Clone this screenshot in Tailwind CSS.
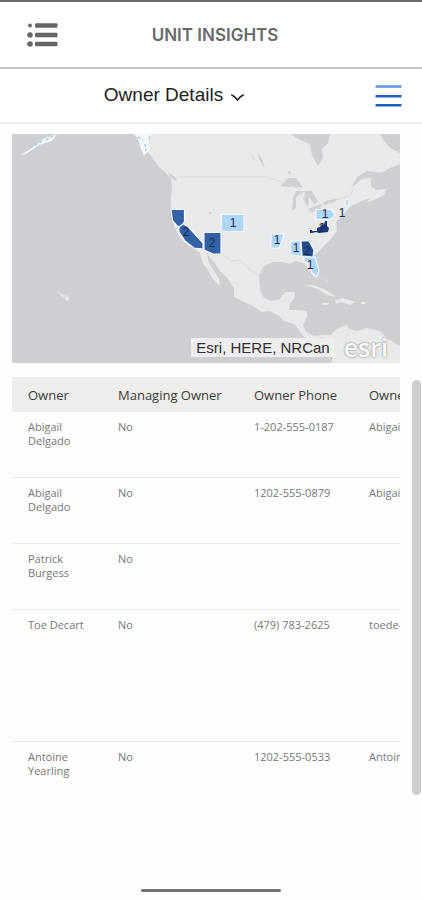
<!DOCTYPE html>
<html lang="en">
<head>
<meta charset="utf-8">
<meta name="viewport" content="width=device-width, initial-scale=1">
<title>Unit Insights</title>
<script src="https://cdn.jsdelivr.net/npm/@tailwindcss/browser@4"></script>
</head>
<body class="bg-[#fefefe] min-h-screen flex flex-col border-t-2 border-[#6c6c6c] overflow-x-hidden font-['Open_Sans',sans-serif]">
  <header class="grid grid-cols-[88px_1fr_80px] items-center h-[67px] border-b-2 border-[#c4c4c4] bg-white">
    <button type="button" aria-label="Open menu" class="pl-[27px]">
      <svg class="w-[31px] h-6" viewBox="0 0 31 24" fill="#666">
        <circle cx="3" cy="2.5" r="1.9"/><circle cx="3" cy="12" r="2.8"/><circle cx="3" cy="21" r="2.8"/>
        <rect x="8" y="0.3" width="22.500" height="4.500" rx="1"/><rect x="8" y="9.700" width="22.500" height="4.500" rx="1"/><rect x="8" y="18.800" width="22.500" height="4.500" rx="1"/>
      </svg>
    </button>
    <h1 class="text-center text-[17px] leading-6 font-semibold text-[#6a6a6a] font-['Inter',sans-serif]">UNIT INSIGHTS</h1>
  </header>

  <nav class="grid grid-cols-[1fr_74px] items-center h-[55px] border-b-2 border-[#eeeeee] bg-white">
    <button type="button" class="flex items-center justify-center gap-2 pb-[2px] text-[19px] leading-6 text-[#222] font-['Liberation_Sans',sans-serif]">
      Owner Details
      <svg class="w-[13px] h-3 mt-1" viewBox="0 0 13 12" fill="none" stroke="#222" stroke-width="1.400" stroke-linecap="round"><path d="M0.700 4Q3.500 5 6.500 9Q9.500 5 12.300 4"/></svg>
    </button>
    <button type="button" aria-label="Page options" class="flex justify-end pr-5">
      <svg class="w-[27px] h-6" viewBox="0 0 27 24"><path d="M0.500 2.500h26" stroke="#6f9fdf" stroke-width="2.800"/><path d="M0.500 12.300h26M0.500 21.300h26" stroke="#1c62be" stroke-width="2.400"/></svg>
    </button>
  </nav>

  <main class="grow pl-3 pr-[22px] pt-[10px]">
    <section aria-label="Owner map" class="relative">
      <svg class="block w-full h-auto" viewBox="12 134 388 229">
        <rect x="12" y="134" width="388" height="229" fill="#cfced2"/>
        <g fill="#e9e9e9">
          <path d="M133 134L138 138L140 147L144 156L146 150L152 157L158 166L165 172L171 179L172 186L171 197L171 212L174 226L179 236L187 245L195 249L200 253L203 263L208 270L213 279L220 286L219 279L212 268L208 261L207 254L214 262L220 271L228 279L234 288L234 297L244 302L253 306L262 312L270 311L279 316L284 321L294 324L299 330L304 337L314 341L322 337L330 341L328 350L333 358L331 363L400 363L400 346L388 339L380 331L367 328L357 331L350 329L346 325L337 329L331 335L323 335L314 336L306 332L303 325L307 317L307 311L297 310L289 310L290 304L294 299L295 292L285 292L280 299L272 301L264 298L260 290L259 276L264 266L273 262L282 262L290 264L295 261L303 263L308 268L314 277L317 274L315 265L312 257L321 249L330 240L337 231L336 222L344 214L351 206L362 201L370 198L367 202L372 201L384 195L386 189L376 190L371 186L371 178L362 179L351 188L357 177L367 171L381 173L390 168L400 164L400 153L390 148L382 138L380 134Z"/>
          <path d="M305 285L313 285L326 290L336 297L327 295L318 289ZM335 300L343 298L355 302L350 305L341 302L336 304ZM361 302l5 0-1 2-4 0ZM322 303l7 0-1 2-5 0ZM325 278l3 4-2-1ZM56 290l9 6-2 1ZM65 295l4 2-1 4-3-1Z"/>
        </g>
        <path d="M20 155L29 150L43 139L57 134L52 141L39 145L26 154ZM135 134h17l-4 7 2 8-6 7-3-8-2-7Z" fill="#f4f7fb"/>
        <path d="M35 145l9-5m2 0l9-5M138 137l5 3m2 4l1 7m3-12l1-3" fill="none" stroke="#a7cdef" stroke-width="1.500" stroke-dasharray="3 2"/>
        <g fill="#cfced2">
          <path d="M291 134L298 139L310 144L312 155L318 166L323 158L322 149L328 143L330 134Z"/>
          <path d="M280 186L288 178L296 178L303 188L296 187L288 187Z"/>
          <path d="M296 191L305 191L296 197L296 208L292 211L293 198Z"/>
          <path d="M305 191L312 191L318 202L314 204L309 197L308 207L304 201Z"/>
          <path d="M308 209L318 205L322 204L321 208L312 213ZM323 202L337 198L335 202L325 205Z"/>
          <path d="M250 151l3 8 5 2-4-2ZM257 151l5 8 3 10-5-8Z"/>
          <circle cx="289.500" cy="172.500" r="1.500"/><circle cx="210" cy="213" r="1.200"/>
          <path d="M168 172l8 6 1 4-7-5Z"/>
        </g>
        <path d="M174 177H264L281 181L299 189L309 211L321 207L339 199L350 196L354 187M207 254L222 254L232 261L240 260L249 269L259 275M320 337l3 12 10 7M348 331l-3 12 15 2" fill="none" stroke="#dbdbdc"/>
        <g stroke="#f2f8ff" stroke-width="1.200" stroke-linejoin="round">
          <path d="M171 209.500h13.500v12l-3 5h-4l-5-6Z" fill="#3460a5"/>
          <path d="M179 227l4-3 4 2 6 6 10 11 0 6-9-1-9-7-6-9Z" fill="#3460a5"/>
          <path d="M204 232.500h17v21.500h-8l-9-4Z" fill="#3460a5"/>
          <g fill="#b0d5fb">
            <path d="M221.500 214.500h22.500v17h-22.500Z"/>
            <path d="M271 234h13l-2 7-3 7h-8Z"/>
            <path d="M316 209.500h15l4 5-4 5h-15Z"/>
            <path d="M346 199l3 1-1 6-3 0Z"/>
            <path d="M290.500 241.500l10-1 1 16-11-2Z"/>
            <path d="M304 257h11l4 13-2 7-5-4-3-11h-5Z"/>
          </g>
          <path d="M301 241h8l5 9-1 7-11-1Z" fill="#234d8e"/>
        </g>
        <path d="M310 230h2v1h5v-3l3-1 2-3 2 1 1-4h2v5l2 2-1 4-9 1-3-1-4 1h-2Z" fill="#18397a"/>
        <g class="font-['Liberation_Sans',sans-serif] text-[12px]" fill="#1b2d4c" text-anchor="middle">
          <text x="186" y="236">2</text><text x="212" y="247">2</text><text x="233" y="227">1</text>
          <text x="277" y="244">1</text><text x="325" y="218">1</text><text x="342" y="217">1</text>
          <text x="296" y="252">1</text><text x="307" y="255">2</text><text x="310" y="269">1</text><text x="322" y="232">2</text>
        </g>
      </svg>
      <div class="absolute right-0 bottom-0 flex items-end">
        <p class="mb-[6px] mr-[10px] pl-[5px] pr-1 bg-[#f0f0f1]/90 text-[15px] leading-[19px] text-[#303030] font-['Liberation_Sans',sans-serif] whitespace-nowrap">Esri, HERE, NRCan</p>
        <a href="#" aria-label="esri" class="mr-3 mb-[2px] text-[25px] leading-[28px] font-semibold text-[#f9f9f9] [text-shadow:0_0_2px_#999,0_0_2px_#aaa] font-['Open_Sans',sans-serif]">esri</a>
      </div>
    </section>

    <section aria-label="Owners" class="relative mt-[14px]">
      <div class="overflow-hidden">
        <table class="table-fixed w-[490px] text-left text-[11px] leading-[14px] text-[#777]">
          <colgroup><col class="w-[90px]"><col class="w-[136px]"><col class="w-[115px]"><col></colgroup>
          <thead class="bg-[#efecec] text-[13px] text-[#3c3c3c]">
            <tr class="h-[35px]"><th class="pl-4 font-normal">Owner</th><th class="pl-4 font-normal">Managing Owner</th><th class="pl-4 font-normal">Owner Phone</th><th class="pl-4 font-normal">Owner Name</th></tr>
          </thead>
          <tbody class="align-top [&_td]:pl-4 [&_td]:pt-2">
            <tr class="h-[65px]"><td>Abigail<br>Delgado</td><td>No</td><td>1-202-555-0187</td><td>Abigail Delgado</td></tr>
            <tr class="h-[66px] border-t border-[#e8e8e8]"><td>Abigail<br>Delgado</td><td>No</td><td>1202-555-0879</td><td>Abigail Delgado</td></tr>
            <tr class="h-[66px] border-t border-[#e8e8e8]"><td>Patrick<br>Burgess</td><td>No</td><td></td><td></td></tr>
            <tr class="h-[132px] border-t border-[#e8e8e8]"><td>Toe Decart</td><td>No</td><td>(479) 783-2625</td><td>toede-cart</td></tr>
            <tr class="h-[66px] border-t border-[#e8e8e8]"><td>Antoine<br>Yearling</td><td>No</td><td>1202-555-0533</td><td>Antoine Yearling</td></tr>
          </tbody>
        </table>
      </div>
      <div class="absolute top-[3px] bottom-3 -right-[21px] w-[9px] rounded-full bg-[#cecece]"></div>
    </section>
  </main>

  <footer class="flex justify-center pb-2"><div class="w-1/3 h-[3px] rounded-full bg-[#737373]"></div></footer>
</body>
</html>
